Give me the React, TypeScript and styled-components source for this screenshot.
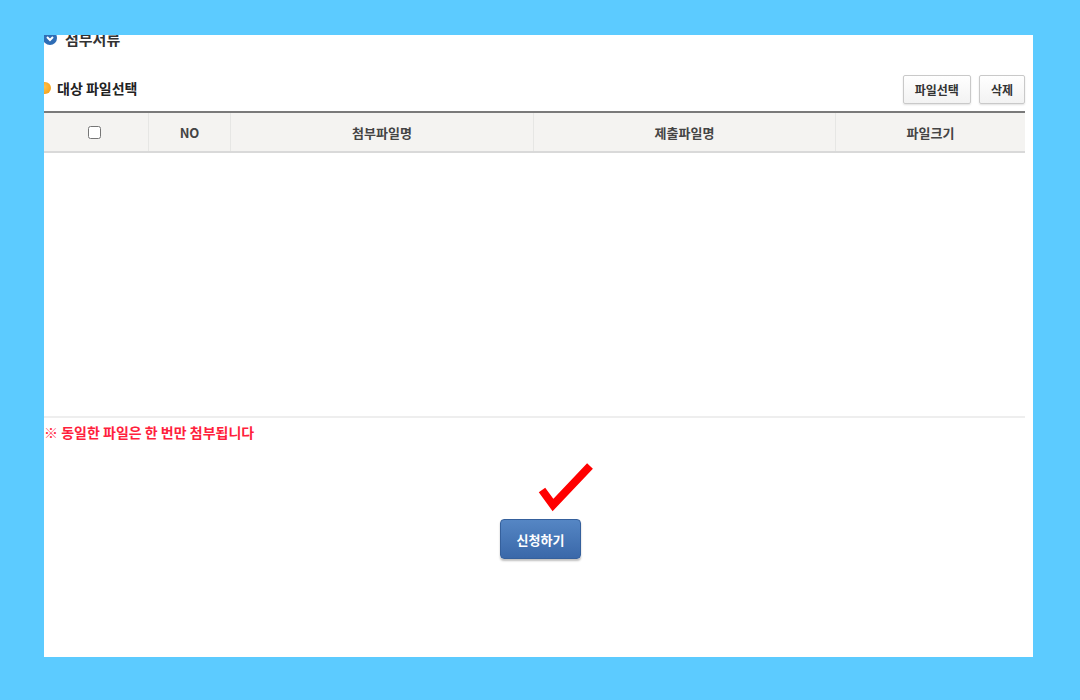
import React, { FC } from 'react';
import styled, { createGlobalStyle } from 'styled-components';

const GlobalStyle = createGlobalStyle`
  html, body {
    margin: 0;
    padding: 0;
    background: #5ccbff;
  }
  body {
    font-family: 'Noto Sans CJK KR', 'Noto Sans', sans-serif;
  }
`;

interface Column {
  label: string;
  width: number;
}

const columns: Column[] = [
  { label: '', width: 104 },
  { label: 'NO', width: 82 },
  { label: '첨부파일명', width: 303 },
  { label: '제출파일명', width: 302 },
  { label: '파일크기', width: 190 }
];

const App: FC = () => {
  return (
    <>
      <GlobalStyle />
      <Page>
        <Panel>
          <Title>
            <BlueBullet>
              <svg width="14" height="14" viewBox="0 0 14 14">
                <circle cx="7" cy="7" r="7" fill="#2f6db5" />
                <path d="M4 6 L7 9 L10 6" stroke="#fff" strokeWidth="2" fill="none" />
              </svg>
            </BlueBullet>
            첨부서류
          </Title>

          <HeadingRow>
            <Heading>
              <OrangeBullet />
              대상 파일선택
            </Heading>
            <Actions>
              <SmallButton>파일선택</SmallButton>
              <SmallButton>삭제</SmallButton>
            </Actions>
          </HeadingRow>

          <FileTable>
            <HeaderRow>
              {columns.map((col, i) => (
                <HeaderCell key={i} style={{ width: col.width }}>
                  {i === 0 ? <CheckBox type="checkbox" /> : col.label}
                </HeaderCell>
              ))}
            </HeaderRow>
            <EmptyBody />
          </FileTable>

          <Notice>※ 동일한 파일은 한 번만 첨부됩니다</Notice>

          <SubmitArea>
            <SubmitWrap>
              <CheckMark width="58" height="50" viewBox="0 0 58 50">
                <path d="M5 28 L16 43 L53 4" stroke="#ff0000" strokeWidth="8" fill="none" strokeLinejoin="miter" />
              </CheckMark>
              <SubmitButton>신청하기</SubmitButton>
            </SubmitWrap>
          </SubmitArea>
        </Panel>
      </Page>
    </>
  );
};

export default App;

const Page = styled('div')`
  width: 1080px;
  height: 700px;
  box-sizing: border-box;
  padding: 35px 47px 43px 44px;
`;

const Panel = styled('div')`
  height: 100%;
  background: #fff;
  overflow: hidden;
  padding-right: 8px;
  display: flex;
  flex-direction: column;
`;

const Title = styled('div')`
  margin-top: -7px;
  height: 20px;
  display: flex;
  align-items: center;
  font-size: 15px;
  font-weight: 700;
  color: #333;
`;

const BlueBullet = styled('span')`
  display: inline-flex;
  margin-left: -1px;
  margin-right: 8px;
`;

const HeadingRow = styled('div')`
  margin-top: 27px;
  height: 29px;
  display: flex;
  align-items: center;
  justify-content: space-between;
`;

const Heading = styled('div')`
  display: flex;
  align-items: center;
  font-size: 14px;
  font-weight: 700;
  color: #222;
  margin-top: -3px;
`;

const OrangeBullet = styled('span')`
  width: 12px;
  height: 12px;
  border-radius: 50%;
  background: radial-gradient(circle at 40% 40%, #ffc24d, #f29a10);
  margin-left: -5px;
  margin-right: 6px;
`;

const Actions = styled('div')`
  display: flex;
  gap: 8px;
`;

const SmallButton = styled('button')`
  height: 29px;
  padding: 0 11px;
  border: 1px solid #c9c9c9;
  border-radius: 2px;
  background: linear-gradient(#ffffff, #f2f2f2);
  box-shadow: 0 1px 2px rgba(0, 0, 0, 0.12);
  font-family: 'Noto Sans CJK KR', sans-serif;
  font-size: 12px;
  font-weight: 700;
  color: #333;
`;

const FileTable = styled('div')`
  margin-top: 7px;
  border-top: 2px solid #7a7a7a;
`;

const HeaderRow = styled('div')`
  display: flex;
  height: 38px;
  background: #f4f3f1;
  border-bottom: 2px solid #d9d9d9;
`;

const HeaderCell = styled('div')`
  display: flex;
  align-items: center;
  justify-content: center;
  box-sizing: border-box;
  border-left: 1px solid #e6e6e4;
  font-size: 13px;
  font-weight: 700;
  color: #444;

  &:first-child {
    border-left: none;
  }
`;

const CheckBox = styled('input')`
  width: 13px;
  height: 13px;
  margin: 0 0 0 -4px;
`;

const EmptyBody = styled('div')`
  height: 263px;
  border-bottom: 2px solid #eeeeee;
`;

const Notice = styled('div')`
  margin-top: 4px;
  line-height: 20px;
  font-size: 14px;
  font-weight: 700;
  color: #ff1f3d;
`;

const SubmitArea = styled('div')`
  display: flex;
  justify-content: center;
  padding-left: 12px;
  margin-top: 77px;
`;

const SubmitWrap = styled('div')`
  position: relative;
`;

const CheckMark = styled('svg')`
  position: absolute;
  left: 37px;
  top: -57px;
`;

const SubmitButton = styled('button')`
  width: 81px;
  height: 40px;
  border: 1px solid #35609c;
  border-radius: 4px;
  background: linear-gradient(#5586c4, #3a68a9);
  box-shadow: 0 2px 2px rgba(0, 0, 0, 0.25);
  font-family: 'Noto Sans CJK KR', sans-serif;
  font-size: 13px;
  font-weight: 700;
  color: #fff;
`;
